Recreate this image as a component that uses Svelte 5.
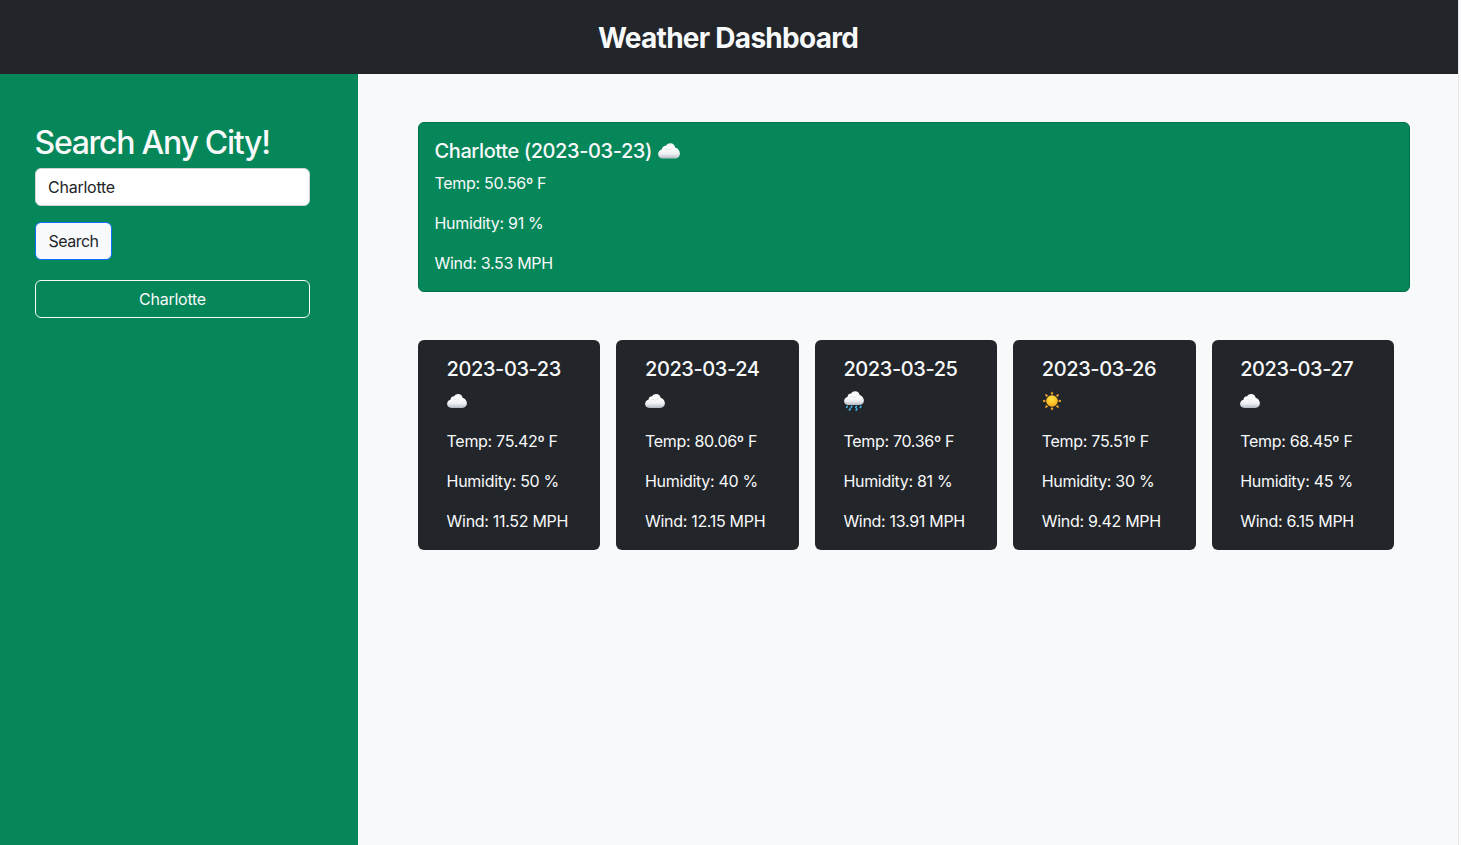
<script>
  const current = { city: 'Charlotte', date: '2023-03-23', icon: 'cloud', temp: '50.56', humidity: 91, wind: '3.53' };
  const forecast = [
    { date: '2023-03-23', icon: 'cloud', temp: '75.42', humidity: 50, wind: '11.52' },
    { date: '2023-03-24', icon: 'cloud', temp: '80.06', humidity: 40, wind: '12.15' },
    { date: '2023-03-25', icon: 'rain', temp: '70.36', humidity: 81, wind: '13.91' },
    { date: '2023-03-26', icon: 'sun', temp: '75.51', humidity: 30, wind: '9.42' },
    { date: '2023-03-27', icon: 'cloud', temp: '68.45', humidity: 45, wind: '6.15' }
  ];
  const history = ['Charlotte'];
  const rays = [0, 45, 90, 135, 180, 225, 270, 315];
  let city = $state('Charlotte');
</script>

{#snippet weatherIcon(kind, size)}
  <svg class="icon" width={size} height={size} viewBox="0 0 20 20" aria-hidden="true">
    <defs>
      <linearGradient id="cloudFill" x1="0" y1="0" x2="0" y2="1">
        <stop offset="0" stop-color="#f1f2f4" />
        <stop offset="0.35" stop-color="#fff" />
        <stop offset="0.7" stop-color="#eceef1" />
        <stop offset="1" stop-color="#b4bbc5" />
      </linearGradient>
      <radialGradient id="sunFill" cx="0.45" cy="0.3" r="0.75">
        <stop offset="0" stop-color="#ffe14a" />
        <stop offset="0.55" stop-color="#ffc629" />
        <stop offset="1" stop-color="#f09a16" />
      </radialGradient>
    </defs>
    {#if kind === 'sun'}
      {#each rays as angle}
        <path d="M9.1 3 L10 0.9 L10.9 3 Z" fill="#eda52b" stroke="#eda52b" stroke-width="0.9" stroke-linejoin="round" transform="rotate({angle} 10 10)" />
      {/each}
      <circle cx="10" cy="10" r="5.8" fill="url(#sunFill)" />
    {:else}
      <g transform={kind === 'rain' ? 'translate(0 -2.8)' : ''}>
        <path d="M4.4 16.9 C1.8 16.9 0.1 15.3 0.1 13 C0.1 10.7 1.7 9.1 3.6 8.5 C3.8 6.3 5.3 5.2 7.2 5.3 C8 3.7 9.5 2.9 11.3 3 C13.7 3.1 15.2 4.6 15.6 6.8 C18 7.4 19.9 9.7 19.9 12.3 C19.9 15.1 18 16.9 15.3 16.9 Z" fill="url(#cloudFill)" />
        <path d="M6.8 8.7 C8 8.1 9.1 8.3 9.8 9.1 C11 9 12.2 8.4 12.7 7.5" fill="none" stroke="#d8dce2" stroke-width="0.8" stroke-linecap="round" />
      </g>
      {#if kind === 'rain'}
        <g stroke="#42b4e8" stroke-width="1.7" stroke-linecap="round">
          <path d="M3.3 15.4 L2.7 16.4 M7.8 15.4 L7.2 16.4 M12.4 15.4 L11.8 16.4 M16.9 15.4 L16.3 16.4 M6.1 18 L5.5 19 M12.8 18 L12.2 19" />
        </g>
      {/if}
    {/if}
  </svg>
{/snippet}

<div class="page">
  <header><h1>Weather Dashboard</h1></header>
  <div class="body">
    <aside>
      <h2>Search Any City!</h2>
      <input bind:value={city} aria-label="City" />
      <button class="search">Search</button>
      {#each history as name}
        <button class="past">{name}</button>
      {/each}
    </aside>
    <main>
      <section class="current">
        <h5><span>{current.city} ({current.date})</span>{@render weatherIcon(current.icon, 22)}</h5>
        <p>Temp: {current.temp}º F</p>
        <p>Humidity: {current.humidity} %</p>
        <p>Wind: {current.wind} MPH</p>
      </section>
      <section class="forecast">
        {#each forecast as day}
          <article>
            <h5>{day.date}</h5>
            <p>{@render weatherIcon(day.icon, 20)}</p>
            <p>Temp: {day.temp}º F</p>
            <p>Humidity: {day.humidity} %</p>
            <p>Wind: {day.wind} MPH</p>
          </article>
        {/each}
      </section>
    </main>
  </div>
</div>

<style>
  :global(body) { margin: 0; background: #fcfcfd; overflow: hidden; }
  * { box-sizing: border-box; }
  .page {
    display: flex; flex-direction: column; width: 1459px; height: 845px;
    border-right: 1px solid #e5e6e9; background: #f8f9fb; color: #f8f9fb;
    font: 430 16px/24px Inter, sans-serif; letter-spacing: -0.3px;
  }
  h1, h2, h5, p { margin: 0; white-space: nowrap; }
  header { height: 74px; padding: 21px 2px 0 0; background: #222529; text-align: center; }
  h1 { font-size: 28px; line-height: 34px; font-weight: 700; letter-spacing: -0.73px; }
  .body { display: flex; flex: 1; min-height: 0; }
  aside {
    display: flex; flex-direction: column; align-items: flex-start;
    width: 358px; padding: 48px 48px 0 35px; background: #058759;
  }
  h2 { font-size: 32px; line-height: 38px; font-weight: 540; margin: 2px 0 6px -0.5px; letter-spacing: -1.28px; }
  input, button { height: 38px; padding: 0 12px; border-radius: 6px; font: inherit; letter-spacing: -0.25px; }
  input { width: 100%; border: 1px solid #ced4da; background: #fff; color: #222529; outline: none; }
  .search { width: 77px; margin: 16px 0 20px; border: 1px solid #0d6efd; background: #f8f9fb; color: #222529; letter-spacing: -0.5px; }
  .past { width: 100%; border: 1px solid #f8f9fb; background: transparent; color: #f8f9fb; }
  main { flex: 1; padding: 48px 48px 0 60px; }
  .current {
    height: 170px; padding: 16px 15.5px; border: 1px solid #04704a; border-radius: 6px; background: #058759;
  }
  h5 { font-size: 20px; line-height: 24px; font-weight: 540; margin-bottom: 8px; letter-spacing: -0.4px; }
  .current h5 { display: flex; align-items: center; gap: 6px; }
  p { height: 24px; margin-bottom: 16px; }
  .icon { display: block; }
  p .icon { position: relative; top: 2px; left: 0.3px; }
  .forecast { display: grid; grid-template-columns: repeat(5, 1fr); column-gap: 16px; margin-top: 48px; padding-right: 16px; }
  article { height: 210px; padding: 17px 0 0 28.6px; border-radius: 6px; background: #222529; }
</style>
